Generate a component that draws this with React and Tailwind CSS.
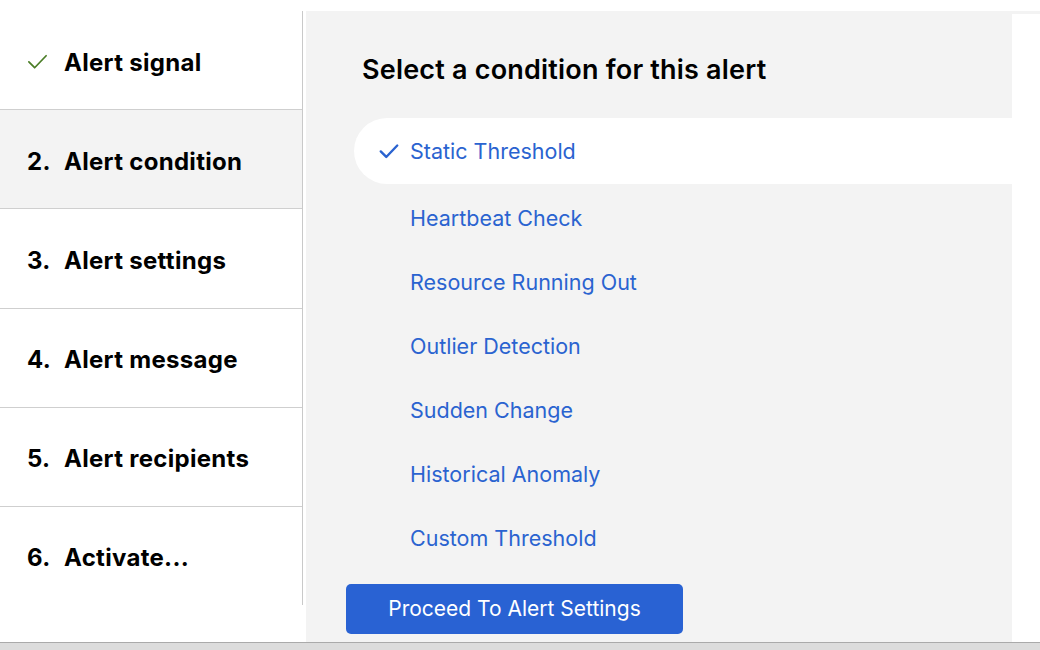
import React from "react";

const steps = [
  { n: null, label: "Alert signal", done: true },
  { n: "2.", label: "Alert condition", active: true },
  { n: "3.", label: "Alert settings" },
  { n: "4.", label: "Alert message" },
  { n: "5.", label: "Alert recipients" },
  { n: "6.", label: "Activate..." },
];

const options = [
  "Heartbeat Check",
  "Resource Running Out",
  "Outlier Detection",
  "Sudden Change",
  "Historical Anomaly",
  "Custom Threshold",
];

function Check({ className, strokeWidth = 2 }) {
  return (
    <svg viewBox="0 0 24 24" fill="none" stroke="currentColor" strokeWidth={strokeWidth} strokeLinecap="round" strokeLinejoin="round" className={className}>
      <path d="M3 12.5l6 6L21 6" />
    </svg>
  );
}

export default function App() {
  return (
    <div className="w-[1040px] h-[650px] bg-white flex flex-col overflow-hidden" style={{ fontFamily: "Inter, 'Noto Sans', sans-serif" }}>
      <div className="h-[11px] shrink-0" />
      <div className="flex h-[631px] shrink-0">
        <div className="w-[303px] shrink-0">
          <div className="h-[594px] border-r border-[#c9c9c9] flex flex-col">
            {steps.map((s, i) => (
              <div
                key={i}
                className={`flex-1 flex items-center pl-[27px] pt-[5px] ${i < steps.length - 1 ? "border-b border-[#cfcfcf]" : ""} ${s.active ? "bg-[#f3f3f3]" : ""}`}
              >
                <div className="w-[37px] shrink-0 flex items-center">
                  {s.done ? (
                    <Check className="w-[23px] h-[23px] text-[#4a7d26] -ml-[1px] -mt-[3px]" strokeWidth={1.8} />
                  ) : (
                    <span className="text-[24px] font-bold text-black tracking-[0.3px]">{s.n}</span>
                  )}
                </div>
                <span className="text-[24px] font-bold text-black tracking-[0.3px]">{s.label}</span>
              </div>
            ))}
          </div>
        </div>
        <div className="w-[3px] shrink-0" />
        <div className="w-[706px] shrink-0 bg-[#f3f3f3] flex flex-col">
          <h1 className="mt-[43px] ml-[56px] text-[27px] leading-[32px] font-semibold text-black tracking-[0.2px]">
            Select a condition for this alert
          </h1>
          <div className="mt-[32px] ml-[48px] h-[66px] shrink-0 bg-white rounded-l-[33px] flex items-center pl-[24px]">
            <Check className="w-[22px] h-[22px] text-[#2a63d0]" strokeWidth={2.6} />
            <span className="ml-[10px] text-[21.5px] text-[#2a63d0]">Static Threshold</span>
          </div>
          <div className="mt-[2px] flex flex-col">
            {options.map((o) => (
              <div key={o} className="h-[64px] flex items-center pl-[104px] text-[21.5px] text-[#2a63d0]">
                {o}
              </div>
            ))}
          </div>
          <button className="mt-[14px] ml-[40px] w-[337px] h-[50px] shrink-0 rounded-[5px] bg-[#2962d3] text-white text-[21px]">
            Proceed To Alert Settings
          </button>
        </div>
        <div className="flex-1 flex flex-col">
          <div className="h-[3px] bg-[#f3f3f3]" />
        </div>
      </div>
      <div className="h-[8px] shrink-0 bg-[#dcdcdc] border-t border-[#aaaaaa]" />
    </div>
  );
}
